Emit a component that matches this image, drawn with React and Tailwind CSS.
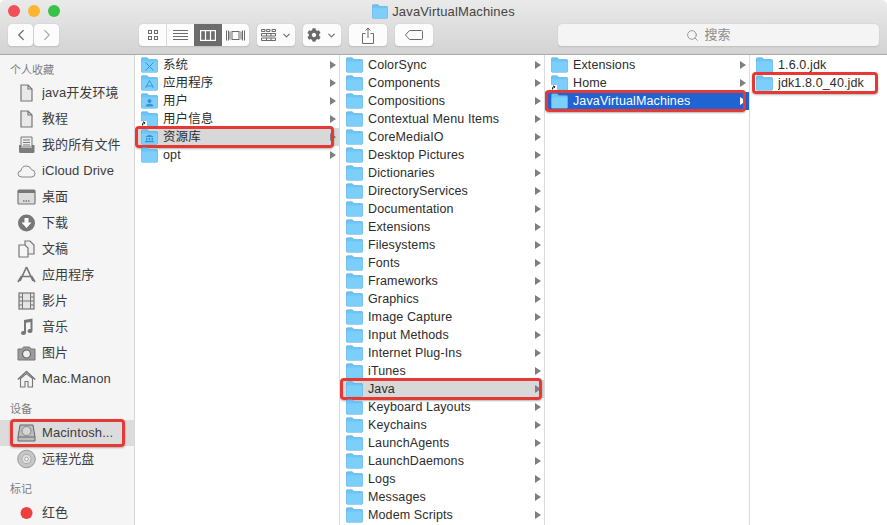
import { ChevronLeft, ChevronRight, ChevronDown, Search } from 'lucide-react';
import { FaCog } from 'react-icons/fa';

const rootItems = [
  { name: '系统', glyph: 'x', arrow: true },
  { name: '应用程序', glyph: 'a', arrow: true },
  { name: '用户', glyph: 'user', arrow: true },
  { name: '用户信息', glyph: 'link', arrow: true },
  { name: '资源库', glyph: 'bank', arrow: true, mark: 'gray' },
  { name: 'opt', arrow: true },
];

const libraryItems = [
  'ColorSync', 'Components', 'Compositions', 'Contextual Menu Items', 'CoreMediaIO', 'Desktop Pictures',
  'Dictionaries', 'DirectoryServices', 'Documentation', 'Extensions', 'Filesystems', 'Fonts', 'Frameworks',
  'Graphics', 'Image Capture', 'Input Methods', 'Internet Plug-Ins', 'iTunes', 'Java', 'Keyboard Layouts',
  'Keychains', 'LaunchAgents', 'LaunchDaemons', 'Logs', 'Messages', 'Modem Scripts',
].map((name) => ({ name, arrow: true, mark: name === 'Java' ? 'java' : undefined }));

const javaItems = [
  { name: 'Extensions', arrow: true },
  { name: 'Home', glyph: 'link', arrow: true },
  { name: 'JavaVirtualMachines', arrow: true, mark: 'blue' },
];

const jdkItems = [
  { name: '1.6.0.jdk' },
  { name: 'jdk1.8.0_40.jdk', mark: 'plain' },
];

const markBox = {
  gray: 'left-0 right-[5px]',
  java: 'left-0 right-[2px]',
  blue: 'left-0 right-[3px]',
  plain: 'left-[2px] right-[9px]',
};

function Folder({ glyph, className = 'h-[16px] w-[17px]' }) {
  return (
    <svg viewBox="0 0 17 16" className={`shrink-0 ${className}`}>
      <path d="M0.5 14.5V1.5Q0.5 0.8 1.2 0.8H6Q6.6 0.8 7 1.4L7.8 2.6H15.8Q16.5 2.6 16.5 3.3V14.5Q16.5 15.2 15.8 15.2H1.2Q0.5 15.2 0.5 14.5Z" fill="#6cc4f7" stroke="#4aa5dd" strokeWidth="0.6" />
      <path d="M0.6 4.4H16.4V14.4Q16.4 15 15.8 15H1.2Q0.6 15 0.6 14.4Z" fill="#7dcffb" />
      {glyph === 'x' && <path d="M4.5 5.5L12.5 13.5M12.5 5.5L4.5 13.5" stroke="#3a8fd0" strokeWidth="1" />}
      {glyph === 'a' && <path d="M8.5 5.5L4.5 13M8.5 5.5L12.5 13M5 11H12" stroke="#3a8fd0" strokeWidth="0.9" fill="none" />}
      {glyph === 'user' && <path d="M8.5 6A2 2 0 1 1 8.5 10A2 2 0 1 1 8.5 6ZM4.5 13.5Q5 10.8 8.5 10.8T12.5 13.5Z" fill="#3a8fd0" />}
      {glyph === 'bank' && <path d="M8.5 5.5L13 8H4ZM5 8.8H6.4V11.5H5ZM7.8 8.8H9.2V11.5H7.8ZM10.6 8.8H12V11.5H10.6ZM4 12H13V13.2H4Z" fill="#3a8fd0" />}
      {glyph === 'link' && (
        <>
          <rect x="0" y="10" width="6" height="6" fill="#fff" />
          <path d="M1.5 14.5V12.8Q1.5 11.8 3 11.8M2 10.8L4 11.8L2.8 13.3" stroke="#222" strokeWidth="1" fill="none" />
        </>
      )}
    </svg>
  );
}

function Row({ item }) {
  const blue = item.mark === 'blue';
  const gray = item.mark === 'gray' || item.mark === 'java';
  const bg = blue ? 'bg-[#2063d2] text-white' : gray ? 'bg-[#d8d8d8]' : '';
  return (
    <div className={`relative flex h-[18px] items-center pl-[6px] pr-[3px] ${bg}`}>
      <Folder glyph={item.glyph} />
      <span className="ml-[5px] flex-1 truncate text-[12.5px] tracking-[0.12px]">{item.name}</span>
      {item.arrow && (
        <span className={`h-0 w-0 border-y-[4px] border-l-[6px] border-y-transparent ${blue ? 'border-l-white' : 'border-l-[#7f7f7f]'}`} />
      )}
      {item.mark && (
        <span className={`absolute -inset-y-[2px] rounded-[4px] border-[3px] border-[#e53935] shadow-[0_1px_2px_rgba(0,0,0,0.3)] ${markBox[item.mark]}`} />
      )}
    </div>
  );
}

function Column({ items, className }) {
  return (
    <div className={`overflow-hidden border-[#dcdcdc] pt-[1px] ${className}`}>
      {items.map((item) => <Row key={item.name} item={item} />)}
    </div>
  );
}

function ToolButton({ className = 'w-[38px]', children }) {
  return (
    <div className={`flex h-[23px] items-center justify-center gap-[5px] rounded-[4px] border-b border-[#c4c4c4] bg-[#fcfcfc] text-[#6a6a6a] shadow-[0_0_1px_rgba(0,0,0,0.25)] ${className}`}>
      {children}
    </div>
  );
}

const sideIcons = {
  doc: <path d="M4 2H11L15 6V18H4ZM11 2V6H15" fill="#e9e9e9" stroke="#777" strokeWidth="1.2" />,
  all: <><path d="M4 2H15V12H4Z" fill="#f0f0f0" stroke="#777" strokeWidth="1" /><path d="M6 5H13M6 7.5H13M6 10H13" stroke="#777" strokeWidth="1" /><path d="M2 10H4V13H15V10H17.5V16.5Q17.5 18 16 18H3.5Q2 18 2 16.5Z" fill="#7c7c7c" /></>,
  cloud: <path d="M5 16Q1 16 1 12.8Q1 10 4 9.8Q4.6 5 9.4 5Q13.4 5 14.4 8.6Q18 9 18 12.4Q18 16 14.6 16Z" fill="#f4f4f4" stroke="#888" strokeWidth="1" />,
  desk: <><rect x="1" y="3" width="17" height="14" rx="1" fill="#dcdcdc" stroke="#777" strokeWidth="1.2" /><path d="M1 3H18V6H1Z" fill="#777" /><path d="M6 14H13" stroke="#777" strokeWidth="1.5" strokeDasharray="1.5 1" /></>,
  down: <><circle cx="9.5" cy="10" r="8.5" fill="#777" /><path d="M7.5 5H11.5V9.5H14.5L9.5 15L4.5 9.5H7.5Z" fill="#fff" /></>,
  docs: <><path d="M8 2H13L17 6V15H8Z" fill="#eee" stroke="#777" strokeWidth="1.2" /><path d="M2 6H8L11 9V18H2Z" fill="#f6f6f6" stroke="#777" strokeWidth="1.2" /></>,
  app: <path d="M9.5 2L3 16M9.5 2L16 16M1 17L4 12M18 17L15 12M3.5 11.5H15.5" fill="none" stroke="#777" strokeWidth="1.7" />,
  film: <><rect x="2" y="2" width="15" height="16" fill="#e4e4e4" stroke="#777" strokeWidth="1.2" /><path d="M5.5 2V18M13.5 2V18M2 6H5.5M2 10H5.5M2 14H5.5M13.5 6H17M13.5 10H17M13.5 14H17M5.5 10H13.5" stroke="#777" strokeWidth="1" /></>,
  music: <path d="M7 3L15.5 1.5V14A2.5 2 0 1 1 13.5 12V5L9 5.8V16A2.5 2 0 1 1 7 14Z" fill="#777" />,
  photo: <><path d="M1 6H5L6.5 4H12.5L14 6H18V17H1Z" fill="#9c9c9c" stroke="#777" strokeWidth="1" /><circle cx="9.5" cy="11" r="4" fill="#eee" stroke="#666" strokeWidth="1.2" /></>,
  home: <><path d="M0.8 10.5L9.5 2.5L18.2 10.5" fill="none" stroke="#777" strokeWidth="1.6" /><path d="M3.5 9.5V18H8V12.5H11V18H15.5V9.5L9.5 4.5Z" fill="#f2f2f2" stroke="#777" strokeWidth="1.1" /></>,
  hd: <><path d="M3 2H16L18 14V18H1V14Z" fill="#bdbdbd" stroke="#666" strokeWidth="1" /><circle cx="9.5" cy="8" r="4.5" fill="#d6d6d6" stroke="#777" strokeWidth="0.8" /><path d="M1 14H18" stroke="#666" strokeWidth="1" /></>,
  disc: <><circle cx="9.5" cy="10" r="8.8" fill="#c6c6c6" stroke="#888" strokeWidth="0.8" /><circle cx="9.5" cy="10" r="4.6" fill="#e2e2e2" stroke="#999" strokeWidth="0.7" /><circle cx="9.5" cy="10" r="1.8" fill="#fff" stroke="#888" strokeWidth="0.7" /></>,
  red: <circle cx="9.5" cy="10" r="6" fill="#ee3f3f" />,
};

function SideItem({ icon, label, mark }) {
  return (
    <div className={`relative flex h-[26px] items-center pl-[17px] text-[13px] tracking-[0.1px] text-[#3c3c3c] ${mark ? 'bg-[#dcdcdc]' : ''}`}>
      <svg viewBox="0 0 19 20" className="h-[20px] w-[19px] shrink-0">{sideIcons[icon]}</svg>
      <span className="ml-[6px] truncate">{label}</span>
      {mark && <span className="absolute -inset-y-[1px] left-[10px] right-[9px] rounded-[4px] border-[3px] border-[#e53935] shadow-[0_1px_2px_rgba(0,0,0,0.3)]" />}
    </div>
  );
}

function SideLabel({ children, className }) {
  return <div className={`pl-[10px] text-[11px] leading-[14px] text-[#7d7d7d] ${className}`}>{children}</div>;
}

function Toolbar() {
  return (
    <div className="h-[55px] shrink-0 border-b border-[#a9a9a9] bg-gradient-to-b from-[#eaeaea] to-[#d3d3d3]">
      <div className="relative flex h-[23px] items-center justify-center text-[13px] tracking-[0.15px] text-[#444]">
        <div className="absolute left-[8px] top-[5px] flex gap-[8px]">
          <span className="h-[12px] w-[12px] rounded-full bg-[#f25056]" />
          <span className="h-[12px] w-[12px] rounded-full bg-[#fbb52e]" />
          <span className="h-[12px] w-[12px] rounded-full bg-[#39c149]" />
        </div>
        <Folder className="mr-[4px] h-[15px] w-[16px]" />
        <span>JavaVirtualMachines</span>
      </div>
      <div className="flex items-center px-[8px] pt-[1px]">
        <div className="flex gap-[1px]">
          <ToolButton className="w-[25px]"><ChevronLeft size={18} strokeWidth={1.6} /></ToolButton>
          <ToolButton className="w-[25px] text-[#b0b0b0]"><ChevronRight size={18} strokeWidth={1.6} /></ToolButton>
        </div>
        <div className="ml-[80px] flex h-[23px] w-[110px] overflow-hidden rounded-[4px] border-b border-[#c4c4c4] bg-[#fcfcfc] shadow-[0_0_1px_rgba(0,0,0,0.25)]">
          <div className="flex w-[28px] items-center justify-center border-r border-[#d8d8d8]">
            <svg viewBox="0 0 12 12" className="h-[12px] w-[12px]" fill="none" stroke="#6a6a6a"><rect x="1.5" y="1.5" width="3" height="3" /><rect x="7.5" y="1.5" width="3" height="3" /><rect x="1.5" y="7.5" width="3" height="3" /><rect x="7.5" y="7.5" width="3" height="3" /></svg>
          </div>
          <div className="flex w-[27px] items-center justify-center">
            <svg viewBox="0 0 15 12" className="h-[12px] w-[15px]" stroke="#6a6a6a"><path d="M0 1.5H15M0 4.5H15M0 7.5H15M0 10.5H15" /></svg>
          </div>
          <div className="flex w-[28px] items-center justify-center bg-[#6c6c6c]">
            <svg viewBox="0 0 16 11" className="h-[11px] w-[16px]" fill="none" stroke="#fff" strokeWidth="1.2"><rect x="0.6" y="0.6" width="14.8" height="9.8" /><path d="M5.5 0.6V10.4M10.5 0.6V10.4" /></svg>
          </div>
          <div className="flex w-[27px] items-center justify-center">
            <svg viewBox="0 0 19 11" className="h-[11px] w-[19px]" fill="none" stroke="#6a6a6a"><rect x="6" y="1.5" width="7" height="8" /><path d="M0.5 0.5V10.5M2.5 0.5V10.5M4 1.5V9.5M15 1.5V9.5M16.5 0.5V10.5M18.5 0.5V10.5" /></svg>
          </div>
        </div>
        <ToolButton className="ml-[8px] w-[38px]">
          <svg viewBox="0 0 15 12" className="h-[12px] w-[15px]" fill="none" stroke="#6a6a6a"><path d="M0.5 0.5H4V2.5H0.5ZM5.5 0.5H9V2.5H5.5ZM11 0.5H14.5V2.5H11ZM0.5 4.5H14.5V7H0.5ZM0.5 9H14.5V11.5H0.5ZM5.5 4.5V7M10 4.5V7M5.5 9V11.5M10 9V11.5" /></svg>
          <ChevronDown size={11} strokeWidth={2.4} />
        </ToolButton>
        <ToolButton className="ml-[8px] w-[38px]">
          <FaCog size={14} />
          <ChevronDown size={11} strokeWidth={2.4} />
        </ToolButton>
        <ToolButton className="ml-[8px] w-[38px]">
          <svg viewBox="0 0 12 17" className="h-[17px] w-[12px]" fill="none" stroke="#6a6a6a"><path d="M3.5 6.5H0.5V16.5H11.5V6.5H8.5M6 11V1M3.5 3.5L6 1L8.5 3.5" /></svg>
        </ToolButton>
        <ToolButton className="ml-[8px] w-[38px]">
          <svg viewBox="0 0 18 10" className="h-[10px] w-[18px]" fill="none" stroke="#6a6a6a"><path d="M4.5 0.5H16.5Q17.5 0.5 17.5 1.5V8.5Q17.5 9.5 16.5 9.5H4.5L0.5 5Z" /></svg>
        </ToolButton>
        <div className="ml-[125px] flex h-[23px] flex-1 items-center justify-center gap-[5px] rounded-[4px] border-b border-[#c4c4c4] bg-[#f4f4f4] pr-[20px] text-[13px] text-[#8c8c8c] shadow-[0_0_1px_rgba(0,0,0,0.25)]">
          <Search size={13} strokeWidth={1.6} />
          <span>搜索</span>
        </div>
      </div>
    </div>
  );
}

export default function App() {
  return (
    <div className="flex h-[525px] w-[887px] flex-col overflow-hidden rounded-t-[5px] bg-white font-['Liberation_Sans','Noto_Sans_CJK_SC',sans-serif] text-[#2c2c2c]">
      <Toolbar />
      <div className="flex min-h-0 flex-1">
        <div className="w-[135px] shrink-0 overflow-hidden border-r border-[#d8d8d8] bg-[#f5f5f5]">
          <SideLabel className="pt-[8px] pb-[3px]">个人收藏</SideLabel>
          <SideItem icon="doc" label="java开发环境" />
          <SideItem icon="doc" label="教程" />
          <SideItem icon="all" label="我的所有文件" />
          <SideItem icon="cloud" label="iCloud Drive" />
          <SideItem icon="desk" label="桌面" />
          <SideItem icon="down" label="下载" />
          <SideItem icon="docs" label="文稿" />
          <SideItem icon="app" label="应用程序" />
          <SideItem icon="film" label="影片" />
          <SideItem icon="music" label="音乐" />
          <SideItem icon="photo" label="图片" />
          <SideItem icon="home" label="Mac.Manon" />
          <SideLabel className="pt-[10px] pb-[4px]">设备</SideLabel>
          <SideItem icon="hd" label="Macintosh..." mark />
          <SideItem icon="disc" label="远程光盘" />
          <SideLabel className="pt-[10px] pb-[4px]">标记</SideLabel>
          <SideItem icon="red" label="红色" />
        </div>
        <Column items={rootItems} className="w-[205px] border-r" />
        <Column items={libraryItems} className="w-[205px] border-r" />
        <Column items={javaItems} className="w-[205px] border-r" />
        <Column items={jdkItems} className="flex-1" />
      </div>
    </div>
  );
}
